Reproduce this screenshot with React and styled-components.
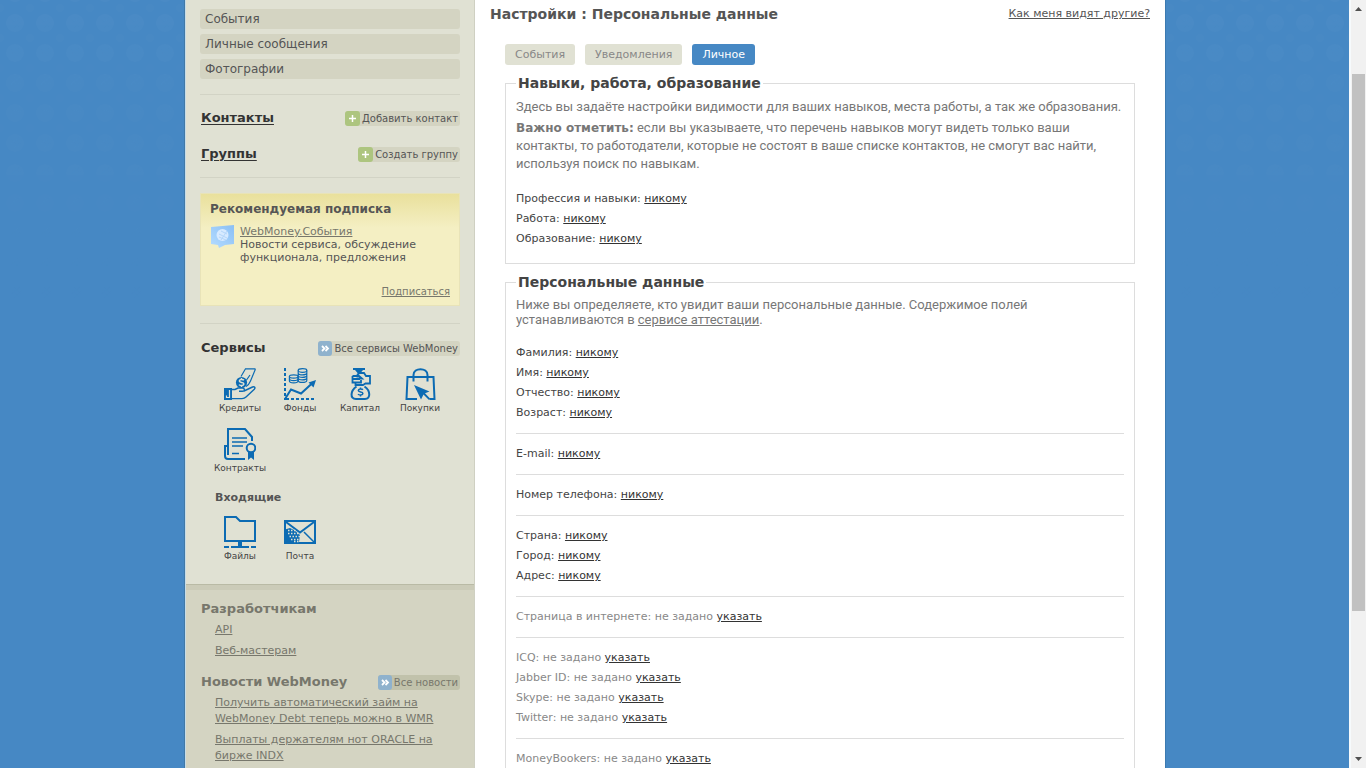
import React from "react";
import styled, { createGlobalStyle, css } from "styled-components";

const Global = createGlobalStyle`
  * { box-sizing: border-box; }
  body { margin: 0; font: 11px/20px "DejaVu Sans", Verdana, sans-serif; color: #444; background: #4688c4; }
  ul { list-style: none; margin: 0; padding: 0; }
  h1, h2, h3, p { margin: 0; }
`;

const Screen = styled.div`
  position: relative;
  display: grid;
  grid-template-columns: minmax(0, 1fr) 17px;
  grid-template-rows: minmax(0, 1fr);
  height: 100vh;
  overflow: hidden;
`;
const Backdrop = styled.svg`
  position: absolute;
  inset: 0;
  width: 100%;
  height: 300px;
  mask-image: linear-gradient(#000, transparent);
`;
const Viewport = styled.div`
  position: relative;
  display: flex;
  justify-content: center;
  align-items: flex-start;
  padding-left: 1px;
  min-width: 0;
`;
const Page = styled.div`
  display: grid;
  grid-template-columns: 290px minmax(0, 1fr);
  width: 100%;
  max-width: 980px;
  min-height: 100vh;
  background: #fff;
  box-shadow: -1px 0 0 #4279a6, 1px 0 0 #3c7ab0;
`;
const Sidebar = styled.aside`
  display: flex;
  flex-direction: column;
  background: #e0e1d3;
  border-left: 1px solid #c5dcea;
  border-right: 1px solid #cfd0c2;
`;
const SideTop = styled.div`
  padding: 9px 14px 20px;
`;
const SideBottom = styled.div`
  flex: 1;
  padding: 14px 14px 20px;
  background: #d4d4c2;
  border-top: 1px solid #b9baa5;
  box-shadow: inset 0 5px 0 #cbcbb8;
`;
const MenuList = styled.ul`
  display: grid;
  gap: 5px;
`;
const MenuLink = styled.a`
  display: block;
  padding-left: 5px;
  font-size: 12px;
  line-height: 20px;
  color: #555;
  text-decoration: none;
  background: #d4d4c2;
  border-radius: 3px;
`;
const Rule = styled.hr`
  margin: ${(p) => p.$space || "15px"} 0;
  border: 0;
  border-top: 1px solid #d2d3c5;
`;
const HeadRow = styled.div`
  display: flex;
  align-items: center;
  justify-content: space-between;
  height: 20px;
  margin-bottom: ${(p) => p.$after || 0};
`;
const SideTitle = styled.h2`
  font-size: 13px;
  line-height: 20px;
  padding-left: 1px;
  color: ${(p) => (p.$muted ? "#77776c" : "#333")};
  a { color: inherit; text-underline-offset: 2px; }
`;
const PillButton = styled.button`
  display: flex;
  align-items: center;
  gap: 2px;
  height: 15px;
  padding: 0 2px 0 0;
  border: 0;
  border-radius: 3px;
  background: ${(p) => (p.$dark ? "#c1c2ab" : "#d4d4c2")};
  color: ${(p) => (p.$dark ? "#77776c" : "#555")};
  font: 10px/15px "DejaVu Sans", Verdana, sans-serif;
  white-space: nowrap;
`;
const PillIcon = styled.svg`
  width: ${(p) => (p.$green ? "15px" : "14px")};
  height: 15px;
  border-radius: 3px;
  background: ${(p) => (p.$green ? "#adc57f" : "#8fb2cd")};
  fill: none;
  stroke: #fff;
`;
const Promo = styled.section`
  display: flex;
  flex-direction: column;
  min-height: 113px;
  padding: 6px 9px;
  border: 1px solid #e8e3b8;
  background: linear-gradient(#e9e09c, #f4efc3 34px);
  color: #555;
`;
const PromoTitle = styled.h3`
  font-size: 12px;
  line-height: 18px;
`;
const PromoBody = styled.div`
  display: grid;
  grid-template-columns: 24px 1fr;
  column-gap: 6px;
  margin-top: 7px;
  line-height: 13px;
  a { color: #77776c; }
`;
const Subscribe = styled.a`
  align-self: flex-end;
  margin-top: auto;
  font-size: 10px;
  line-height: 14px;
  color: #77776c;
`;
const ServiceGrid = styled.ul`
  display: grid;
  grid-template-columns: repeat(4, 60px);
  row-gap: 12px;
  padding-left: 10px;
`;
const ServiceLink = styled.a`
  display: flex;
  flex-direction: column;
  align-items: center;
  font-size: 9px;
  line-height: 16px;
  color: #444;
  text-decoration: none;
  svg { display: block; width: 32px; height: 32px; fill: none; stroke: #0c6bb3; stroke-width: 2; }
`;
const InboxTitle = styled.h3`
  margin: 12px 0 8px;
  padding-left: 15px;
  font-size: 11px;
  line-height: 20px;
  color: #555;
`;
const SideLinks = styled.ul`
  display: grid;
  gap: 5px;
  padding: 3px 20px 0 15px;
  line-height: 16px;
  margin-bottom: 13px;
  a { color: #77776c; }
`;
const Main = styled.main`
  min-width: 0;
  padding: 4px 15px 0;
`;
const TitleRow = styled.header`
  display: flex;
  justify-content: space-between;
  align-items: center;
  height: 20px;
  a { color: #555; }
`;
const PageTitle = styled.h1`
  font-size: 14px;
  line-height: 20px;
  color: #555;
`;
const Tabs = styled.nav`
  display: flex;
  gap: 10px;
  margin: 20px 15px 10px;
`;
const Tab = styled.button`
  height: 21px;
  padding: 0 10px;
  border: 0;
  border-radius: 3px;
  font: 11px/21px "DejaVu Sans", Verdana, sans-serif;
  background: #e0e1d3;
  color: #888;
  ${(p) => p.$active && css`background: #4688c4; color: #fff;`}
`;
const Box = styled.fieldset`
  min-width: 0;
  margin: 0 15px 10px;
  padding: 7px 10px 14px;
  border: 1px solid #ddd;
`;
const Legend = styled.legend`
  padding: 0 2px;
  font-size: 14px;
  line-height: 16px;
  font-weight: bold;
  color: #444;
`;
const Note = styled.p`
  margin-bottom: ${(p) => p.$after};
  font: 13px/${(p) => p.$line} Roboto, Verdana, sans-serif;
  color: #777;
  a { color: inherit; }
  b { font-family: "DejaVu Sans", Verdana, sans-serif; font-size: 12px; line-height: 1; }
`;
const Group = styled.ul`
  & + & { margin-top: 10px; padding-top: 10px; border-top: 1px solid #ddd; }
`;
const Field = styled.li`
  color: ${(p) => (p.$muted ? "#888" : "#444")};
  line-height: 20px;
  a { color: #333; }
`;
const Scroll = styled.div`
  position: relative;
  display: flex;
  flex-direction: column;
  align-items: center;
  background: #f1f1f1;
  border-left: 2px solid #f6fafc;
  padding: 6px 0;
  svg { width: 7px; height: 5px; flex: none; fill: #505050; }
`;
const Track = styled.div`
  display: grid;
  grid-template-rows: 63fr 537fr 146fr;
  flex: 1;
  width: 13px;
`;
const Thumb = styled.div`
  grid-row: 2;
  background: #c1c1c1;
`;

const Dollar = ({ x, y, color = "#0c6bb3" }) => (
  <path transform={`translate(${x} ${y})`} stroke={color} strokeWidth="1.5" d="M2.4-2.2C1.7-3.2-2.2-3.3-2.2-1.4C-2.2.5 2.4-.5 2.4 1.5C2.4 3.3-1.6 3.3-2.5 2.1M0-4.5V-2.8M0 2.8V4.5" />
);

const icons = {
  credit: (
    <svg viewBox="0 0 32 32" aria-hidden="true">
      <path d="M0 20h8v12H0z" fill="#0c6bb3" stroke="none" />
      <path d="M5.5 22v7.5H2.5v-2" stroke="#e0e1d3" strokeWidth="1.2" />
      <path strokeWidth="1.4" d="M8 21.5h3l3-1.5h4.5c2.5 0 2.5 3.3 0 3.3H15M20 23l8.5-4c2-.8 3.2.7 1.8 2.2L22 29c-1.3 1.3-2 1.6-4 1.6H8" />
      <path strokeWidth="1.2" d="M31.5.8H21.5L17 8.5M31.5 1l-5 12c-.8 2-2.5 4.5-4.5 5.5M26 7l-3.5 5" />
      <circle cx="17.5" cy="14.5" r="5.6" fill="#0c6bb3" stroke="none" />
      <Dollar x={17.5} y={14.5} color="#e0e1d3" />
    </svg>
  ),
  funds: (
    <svg viewBox="0 0 32 32" aria-hidden="true">
      <path strokeDasharray="3 2" d="M1 0v32M2 31h30" />
      <path d="M1 31l6-9.5 10 4L29 14.5" />
      <path d="M32 12l-7.5 2.5 5 5z" fill="#0c6bb3" stroke="none" />
      <g strokeWidth="1.2">
        <ellipse cx="18.5" cy="2.5" rx="4.3" ry="1.8" />
        <path d="M14.2 2.5v10c0 2.6 8.6 2.6 8.6 0v-10M14.2 5c0 2.5 8.6 2.5 8.6 0M14.2 7.5c0 2.5 8.6 2.5 8.6 0M14.2 10c0 2.5 8.6 2.5 8.6 0" />
        <ellipse cx="9.7" cy="8.5" rx="4.3" ry="1.6" fill="#e0e1d3" />
        <path d="M5.4 8.5V13c0 2.5 8.6 2.5 8.6 0V8.5M5.4 10.8c0 2.4 8.6 2.4 8.6 0" />
      </g>
    </svg>
  ),
  capital: (
    <svg viewBox="0 0 32 32" aria-hidden="true">
      <path d="M9 0h12v2h-2l-2.5 3h-3L11 2H9z" fill="#0c6bb3" stroke="none" />
      <path strokeWidth="1.8" d="M13 7l2.5-2H20l2 3h4v7.5h-4.5L19 17h-7.5v-2M8.5 8H15l3 2.5h-5.5M8.5 8v3H16M8.5 11v3.5H17V12" />
      <path d="M12.5 18.5c-6 4-7 12.5-.5 12.5h9c6 0 5.5-8.5-.5-12.5" />
      <Dollar x={16.5} y={24} />
    </svg>
  ),
  shopping: (
    <svg viewBox="0 0 32 32" aria-hidden="true">
      <path d="M13 31H2.500L3.500 9h26l1 22H26" />
      <path d="M9.500 13.500V7C9.500-.8 23.500-.8 23.500 7v6.500" />
      <path d="M10 17l15.500 6.500-4.500 1.800 5.500 5.700-1.500 1-5.500-5.500-2.500 5z" fill="#0c6bb3" stroke="none" />
    </svg>
  ),
  contracts: (
    <svg viewBox="0 0 32 32" aria-hidden="true">
      <path d="M4 27V1h17l7 8v4M3 18H1v10c0 2 1 3 3 3h17M4 18v9" />
      <path strokeWidth="1.7" d="M8 10h15M8 14h15M8 18h11M8 25.5h7" />
      <circle cx="27" cy="20" r="4.3" />
      <path d="M24 24h6v8l-3-2.500-3 2.500z" fill="#0c6bb3" stroke="none" />
    </svg>
  ),
  files: (
    <svg viewBox="0 0 32 32" aria-hidden="true">
      <path d="M1 25V1h11l4 4h15v20zM0 31h5M7 31h18M27 31h5" />
      <path d="M16 25v6" strokeWidth="4" />
    </svg>
  ),
  mail: (
    <svg viewBox="0 0 32 32" aria-hidden="true">
      <path d="M1 5h30v22H1zM2 6l14 10.5L30 6" />
      <path strokeWidth="1.5" d="M20 16l10 10" />
      <path d="M1 13.5l5-1.500 4 2 6 5-1 7H1z" fill="#0c6bb3" stroke="none" />
      <path stroke="#e0e1d3" strokeWidth="1.3" strokeDasharray="1.500 1.500" d="M4 14.500h9M4 17.500h12M5.500 20.500h11M7 23.500h10M10 25.500h6" />
    </svg>
  ),
};

const Plus = () => (
  <PillIcon $green viewBox="0 0 15 15" aria-hidden="true"><path d="M4 7.5h7M7.5 4v7" strokeWidth="1.5" /></PillIcon>
);
const Chevrons = () => (
  <PillIcon viewBox="0 0 14 15" aria-hidden="true"><path d="M4 5l2.5 2.5L4 10M7.5 5L10 7.5 7.5 10" strokeWidth="1.8" /></PillIcon>
);

const Service = ({ icon, label }) => (
  <li><ServiceLink href="#">{icons[icon]}{label}</ServiceLink></li>
);

const FieldGroup = ({ items, unset }) => (
  <Group>
    {items.map((name) => (
      <Field key={name} $muted={unset}>
        {name}: {unset ? "не задано " : ""}<a href="#">{unset ? "указать" : "никому"}</a>
      </Field>
    ))}
  </Group>
);

export default function App() {
  return (
    <>
      <Global />
      <Screen>
        <Backdrop aria-hidden="true">
          <defs>
            <pattern id="globes" y="8" width="30" height="30" patternUnits="userSpaceOnUse">
              <circle cx="15" cy="15" r="9" fill="#fff" fillOpacity=".025" />
              <path d="M11 11l8 8M14 9l7 7M11 16l9-7M14 20l8-8" stroke="#4688c4" strokeOpacity=".35" fill="none" />
              <circle cx="0" cy="0" r="4" fill="#fff" fillOpacity=".012" />
              <circle cx="30" cy="0" r="4" fill="#fff" fillOpacity=".012" />
              <circle cx="0" cy="30" r="4" fill="#fff" fillOpacity=".012" />
              <circle cx="30" cy="30" r="4" fill="#fff" fillOpacity=".012" />
            </pattern>
          </defs>
          <rect width="100%" height="100%" fill="url(#globes)" />
        </Backdrop>
        <Viewport>
          <Page>
            <Sidebar>
              <SideTop>
                <MenuList>
                  <li><MenuLink href="#">События</MenuLink></li>
                  <li><MenuLink href="#">Личные сообщения</MenuLink></li>
                  <li><MenuLink href="#">Фотографии</MenuLink></li>
                </MenuList>
                <Rule $space="15px 0 13px" />
                <HeadRow $after="16px">
                  <SideTitle><a href="#">Контакты</a></SideTitle>
                  <PillButton><Plus />Добавить контакт</PillButton>
                </HeadRow>
                <HeadRow>
                  <SideTitle><a href="#">Группы</a></SideTitle>
                  <PillButton><Plus />Создать группу</PillButton>
                </HeadRow>
                <Rule $space="13px 0 15px" />
                <Promo>
                  <PromoTitle>Рекомендуемая подписка</PromoTitle>
                  <PromoBody>
                    <svg width="24" height="24" viewBox="0 0 24 24" aria-hidden="true">
                      <defs>
                        <linearGradient id="bubble" x1="0" y1="1" x2="1" y2="0">
                          <stop offset="0" stopColor="#b4dcff" />
                          <stop offset="1" stopColor="#8abff5" />
                        </linearGradient>
                      </defs>
                      <path d="M1 2L24 0v19l-9 1-6 3-1-3-7-1z" fill="url(#bubble)" />
                      <circle cx="12.5" cy="10" r="6" fill="#d7eaff" />
                      <path d="M11 6l6 3M9 9l8 4M9 12l7 3M17 6l-6 9" stroke="#b4d6fa" fill="none" />
                    </svg>
                    <div><a href="#">WebMoney.События</a><p>Новости сервиса, обсуждение функционала, предложения</p></div>
                  </PromoBody>
                  <Subscribe href="#">Подписаться</Subscribe>
                </Promo>
                <Rule $space="17px 0 14px" />
                <HeadRow $after="10px">
                  <SideTitle>Сервисы</SideTitle>
                  <PillButton><Chevrons />Все сервисы WebMoney</PillButton>
                </HeadRow>
                <ServiceGrid>
                  <Service icon="credit" label="Кредиты" />
                  <Service icon="funds" label="Фонды" />
                  <Service icon="capital" label="Капитал" />
                  <Service icon="shopping" label="Покупки" />
                  <Service icon="contracts" label="Контракты" />
                </ServiceGrid>
                <InboxTitle>Входящие</InboxTitle>
                <ServiceGrid>
                  <Service icon="files" label="Файлы" />
                  <Service icon="mail" label="Почта" />
                </ServiceGrid>
              </SideTop>
              <SideBottom>
                <HeadRow><SideTitle $muted>Разработчикам</SideTitle></HeadRow>
                <SideLinks>
                  <li><a href="#">API</a></li>
                  <li><a href="#">Веб-мастерам</a></li>
                </SideLinks>
                <HeadRow>
                  <SideTitle $muted>Новости WebMoney</SideTitle>
                  <PillButton $dark><Chevrons />Все новости</PillButton>
                </HeadRow>
                <SideLinks>
                  <li><a href="#">Получить автоматический займ на WebMoney Debt теперь можно в WMR</a></li>
                  <li><a href="#">Выплаты держателям нот ORACLE на бирже INDX</a></li>
                </SideLinks>
              </SideBottom>
            </Sidebar>
            <Main>
              <TitleRow>
                <PageTitle>Настройки : Персональные данные</PageTitle>
                <a href="#">Как меня видят другие?</a>
              </TitleRow>
              <Tabs>
                <Tab>События</Tab>
                <Tab>Уведомления</Tab>
                <Tab $active>Личное</Tab>
              </Tabs>
              <Box>
                <Legend>Навыки, работа, образование</Legend>
                <Note $line="18px" $after="3px">Здесь вы задаёте настройки видимости для ваших навыков, места работы, а так же образования.</Note>
                <Note $line="18px" $after="16px"><b>Важно отметить:</b> если вы указываете, что перечень навыков могут видеть только ваши контакты, то работодатели, которые не состоят в ваше списке контактов, не смогут вас найти, используя поиск по навыкам.</Note>
                <FieldGroup items={["Профессия и навыки", "Работа", "Образование"]} />
              </Box>
              <Box>
                <Legend>Персональные данные</Legend>
                <Note $line="15px" $after="16px">Ниже вы определяете, кто увидит ваши персональные данные. Содержимое полей устанавливаются в <a href="#">сервисе аттестации</a>.</Note>
                <FieldGroup items={["Фамилия", "Имя", "Отчество", "Возраст"]} />
                <FieldGroup items={["E-mail"]} />
                <FieldGroup items={["Номер телефона"]} />
                <FieldGroup items={["Страна", "Город", "Адрес"]} />
                <FieldGroup unset items={["Страница в интернете"]} />
                <FieldGroup unset items={["ICQ", "Jabber ID", "Skype", "Twitter"]} />
                <FieldGroup unset items={["MoneyBookers"]} />
              </Box>
            </Main>
          </Page>
        </Viewport>
        <Scroll aria-hidden="true">
          <svg viewBox="0 0 7 5"><path d="M0 5l3.5-4L7 5z" /></svg>
          <Track><Thumb /></Track>
          <svg viewBox="0 0 7 5"><path d="M0 0l3.5 4L7 0z" /></svg>
        </Scroll>
      </Screen>
    </>
  );
}
